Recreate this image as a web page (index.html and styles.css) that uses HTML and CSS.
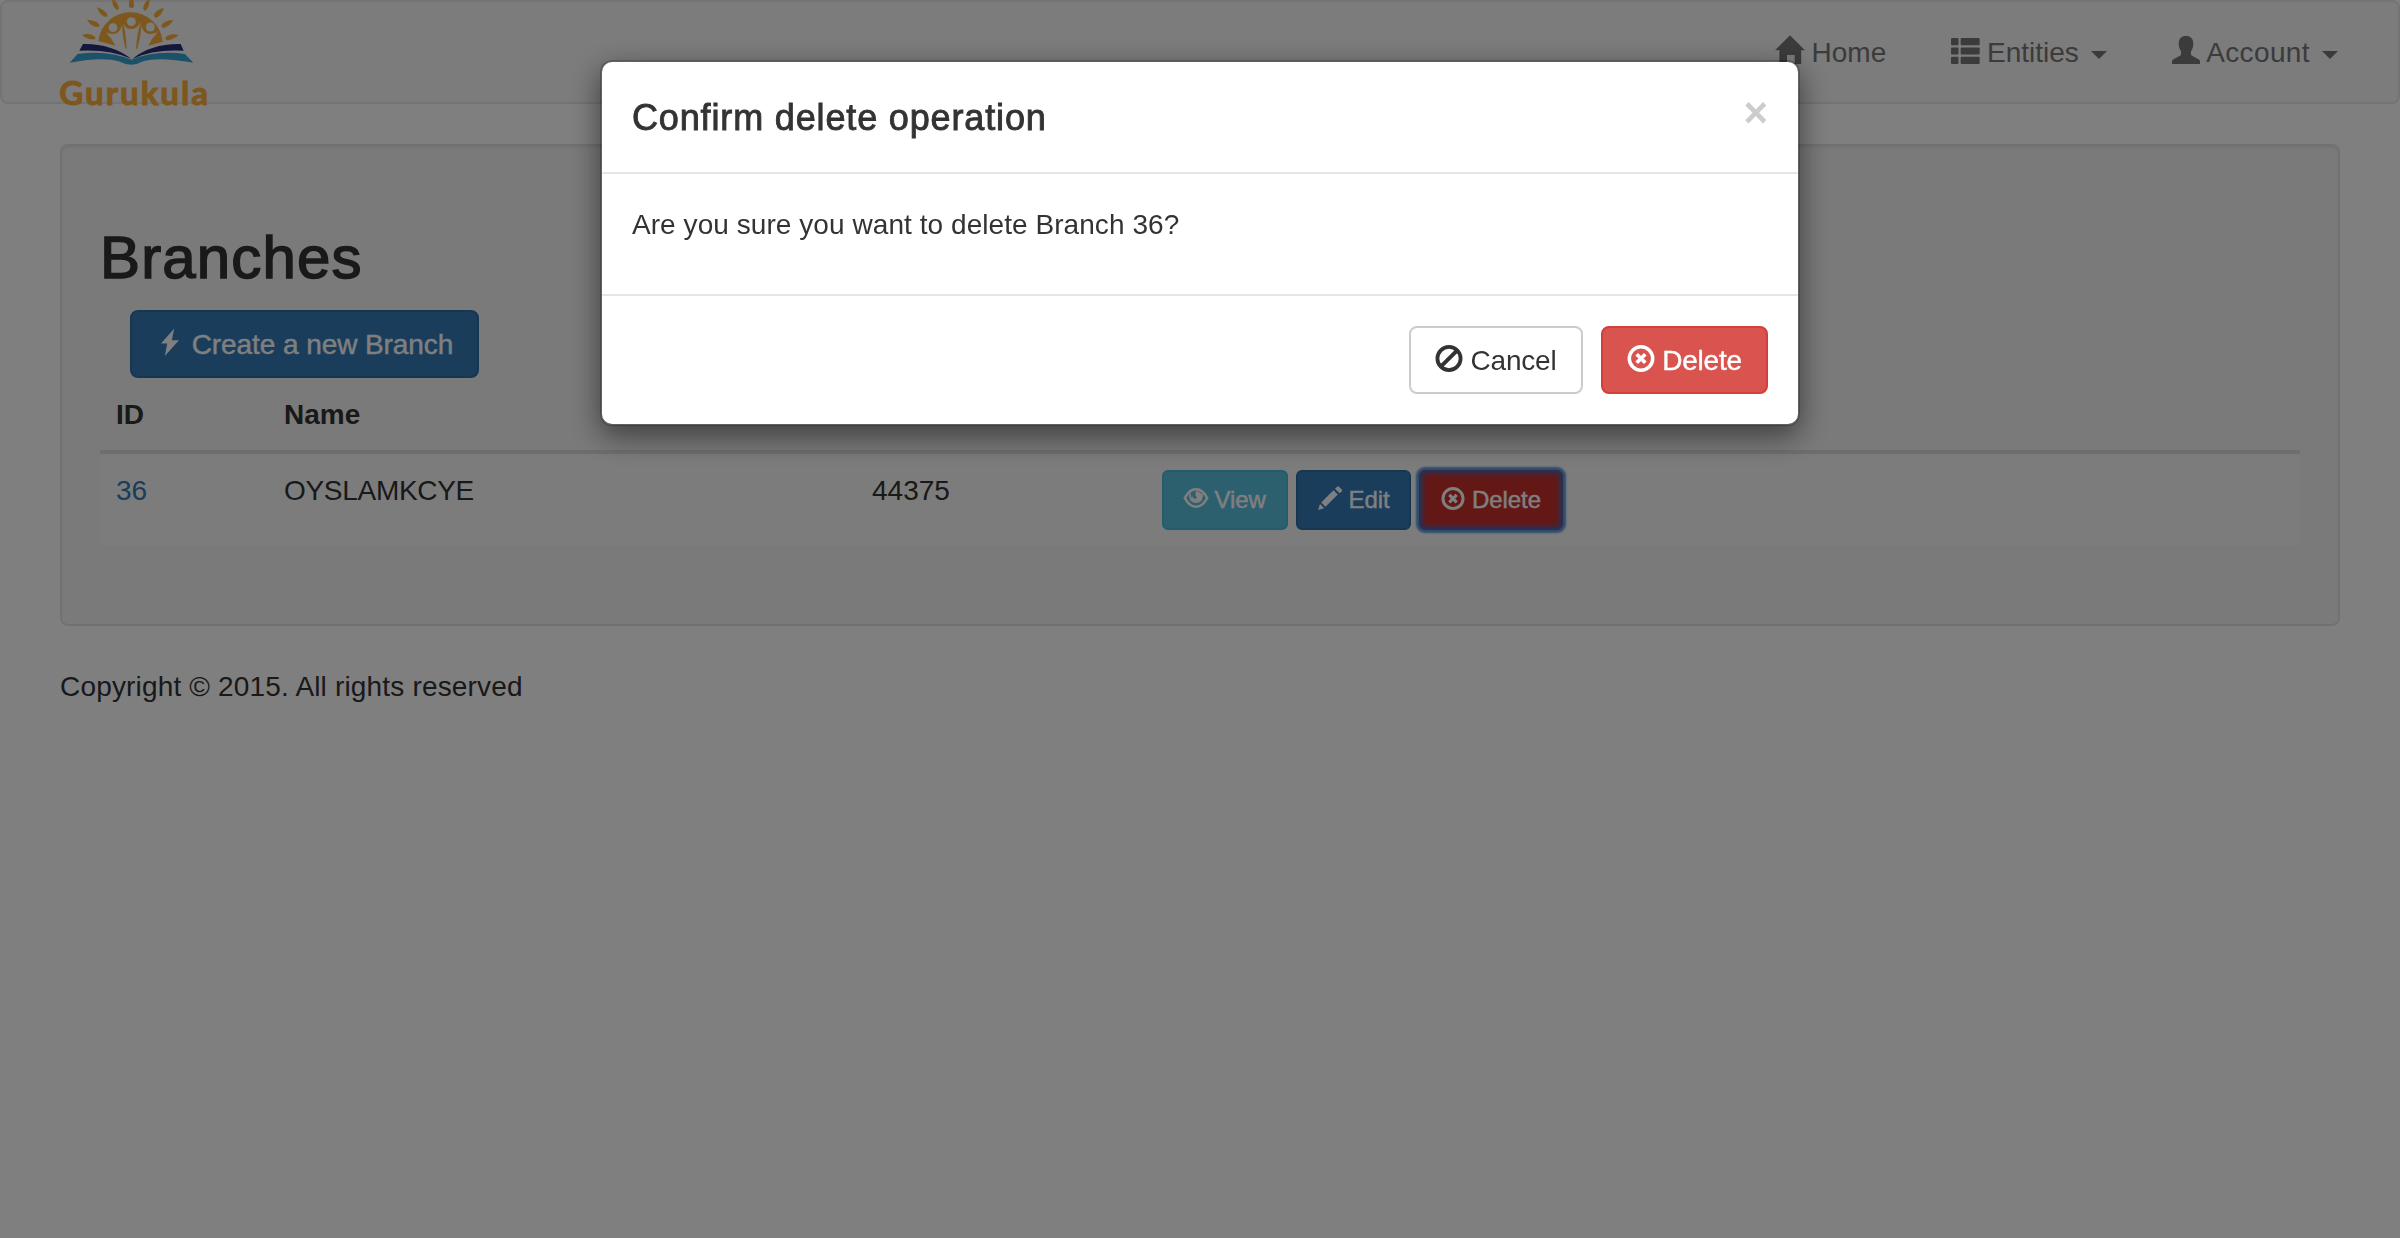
FILE: index.html
```html
<!DOCTYPE html>
<html lang="en">
<head>
<meta charset="utf-8">
<title>Branches</title>
<link rel="stylesheet" href="styles.css">
</head>
<body>
<svg class="sprite" aria-hidden="true">
  <symbol id="remove-circle" viewBox="0 0 28 28">
    <circle cx="14" cy="13.5" r="11.7" fill="none" stroke="currentColor" stroke-width="3.5"/>
    <path d="M9.7 9.2l8.6 8.6M18.3 9.2l-8.6 8.6" stroke="currentColor" stroke-width="3.7" fill="none"/>
  </symbol>
</svg>

<nav class="navbar">
  <a class="brand">
    <svg class="logo" viewBox="180 0 450 330">
      <g fill="#fbaf3c">
        <path d="M295 123A97 97 0 0 1 488 125L445 137 394 150 346 137Z"/>
        <path d="M286 117Q266 122 246 105Q270 97 286 111Z"/>
        <path d="M297 80Q276 84 261 59Q289 60 299 74Z"/>
        <path d="M320 51Q300 50 291 22Q316 30 322 45Z"/>
        <path d="M353 30Q336 24 336 -6Q355 8 357 26Z"/>
        <path d="M387 21Q386 0 394 -12Q403 0 402 21Q394 27 387 21Z"/>
        <path d="M429 26Q431 8 449 -6Q449 24 435 33Z"/>
        <path d="M461 46Q466 30 492 23Q483 50 466 54Z"/>
        <path d="M484 76Q493 61 520 60Q505 84 487 84Z"/>
        <path d="M496 112Q512 98 536 106Q515 123 498 120Z"/>
      </g>
      <g fill="#f8f8f8">
        <path d="M317 97Q338 106 352 98Q363 90 366 74Q367 110 378 152L346 137Q336 116 317 97Z"/>
        <path d="M370 71Q378 87 394 87Q411 87 423 65Q410 100 408 152H380Q379 105 370 71Z"/>
        <path d="M473 97Q450 106 437 98Q426 90 425 74Q422 110 411 152L445 137Q454 116 473 97Z"/>
        <circle cx="339" cy="83" r="13"/><circle cx="394" cy="65" r="13.500"/><circle cx="451" cy="81" r="13.500"/>
      </g>
      <path fill="#2a2c7c" d="M249 132Q332 130 394 176Q328 147 238 152ZM542 132Q456 130 397 176Q462 147 551 152Z"/>
      <path fill="#38a5d2" d="M233 162Q322 150 394 179Q466 150 555 162L580 188Q474 169 430 184Q412 194 394 194Q374 194 356 184Q310 170 209 188Z"/>
      <text class="logo-name" x="178" y="314" textLength="446">Gurukula</text>
    </svg>
  </a>
  <ul class="nav">
    <li><svg class="icon" viewBox="0 0 28 28"><path fill="currentColor" d="M14-1.800L29 13.200H25.200V27H18.700V18H11V27H3.400V13.200H-1Z"/></svg> Home</li>
    <li><svg class="icon" viewBox="0 0 28 28"><g fill="currentColor"><rect y="1" width="7.500" height="7.300" rx="1"/><rect x="9.700" y="1" width="19" height="7.300" rx="1"/><rect y="10.500" width="7.500" height="7" rx="1"/><rect x="9.700" y="10.500" width="19" height="7" rx="1"/><rect y="19.700" width="7.500" height="7.300" rx="1"/><rect x="9.700" y="19.700" width="19" height="7.300" rx="1"/></g></svg> Entities <span class="caret"></span></li>
    <li class="account"><svg class="icon" viewBox="0 0 28 28"><path fill="currentColor" d="M14-1C18.500-1 21.300 1.600 21.300 6.500C21.300 10.500 20 12.500 19 14.500V17.300Q19 18.200 20 18.800L26.500 22.200Q28 23 28 24.500V27H0V24.500Q0 23 1.500 22.200L8 18.800Q9 18.200 9 17.300V14.500C8 12.500 6.700 10.500 6.700 6.500C6.700 1.600 9.500-1 14-1Z"/></svg> Account <span class="caret"></span></li>
  </ul>
</nav>

<div class="container">
  <main class="well">
    <h2>Branches</h2>
    <div class="toolbar">
      <button class="btn primary"><svg class="icon" viewBox="0 0 28 28"><path fill="currentColor" d="M18.300-.500L5 14.500H11.200L8.800 27L23 11.200H15.800Z"/></svg> Create a new Branch</button>
    </div>
    <table>
      <colgroup><col class="col-id"><col class="col-name"><col class="col-code"><col></colgroup>
      <thead><tr><th>ID</th><th>Name</th><th></th><th></th></tr></thead>
      <tbody>
        <tr>
          <td><a class="link">36</a></td>
          <td class="name">OYSLAMKCYE</td>
          <td>44375</td>
          <td class="actions-cell"><div class="actions">
            <button class="btn small info"><svg class="icon" viewBox="0 0 24 24"><path fill="none" stroke="currentColor" stroke-width="2.600" d="M.800 11Q5.500 2.300 12 2.300T23.200 11Q18.500 19.700 12 19.700T.800 11Z"/><path fill="none" stroke="currentColor" stroke-width="1.600" d="M6 6.500Q4.800 14.500 12 15.500Q19.200 14.500 18 6.500"/><path fill="currentColor" d="M12 4A6 6 0 0 1 18 9.500A6 5.500 0 0 1 7.800 13Q6.800 10.500 8 8Q8.500 11.500 11 12L13 10.500Q10.500 8 12 4Z"/></svg> View</button>
            <button class="btn small primary"><svg class="icon" viewBox="0 0 24 24"><path fill="currentColor" d="M0 23L2 17L6.200 21.200ZM3.200 15.500L15.500 3.200L19.800 7.500L7.500 19.800ZM17 1.800L19 -.200Q20-1.200 21 -.200L23.800 2.500Q24.700 3.500 23.800 4.500L21.500 6.300Z"/></svg> Edit</button>
            <button class="btn small danger focused"><svg class="icon"><use href="#remove-circle"/></svg> Delete</button>
          </div></td>
        </tr>
      </tbody>
    </table>
  </main>
  <footer>Copyright © 2015. All rights reserved</footer>
</div>

<div class="backdrop">
  <section class="modal" role="dialog">
    <header class="modal-header"><h4>Confirm delete operation</h4><span class="close">×</span></header>
    <div class="modal-body"><p>Are you sure you want to delete Branch 36?</p></div>
    <div class="modal-footer">
      <button class="btn plain"><svg class="icon" viewBox="0 0 28 28"><circle cx="14" cy="13.500" r="11.600" fill="none" stroke="currentColor" stroke-width="3.800"/><path d="M5.800 21.700L22.200 5.300" stroke="currentColor" stroke-width="4"/></svg> Cancel</button>
      <button class="btn danger"><svg class="icon"><use href="#remove-circle"/></svg> Delete</button>
    </div>
  </section>
</div>
</body>
</html>
```
FILE: styles.css
```css
* { box-sizing: border-box; }
html, body { height: 100%; }
body {
  margin: 0;
  overflow: hidden;
  background: #fff;
  color: #333;
  font: 28px/40px "Liberation Sans", Arial, sans-serif;
}
.sprite { display: none; }
h2, h4, p, ul { margin: 0; padding: 0; font-weight: 400; }

.icon {
  width: 1em;
  height: 1em;
  vertical-align: -3px;
  overflow: visible;
}

.navbar {
  display: flex;
  justify-content: space-between;
  height: 104px;
  padding: 0 60px 0 58px;
  margin-bottom: 40px;
  border: 2px solid #e7e7e7;
  border-radius: 8px;
  background: #f8f8f8;
}
.brand { height: 110px; margin-top: -2px; }
.logo { display: block; width: 150px; height: 110px; overflow: visible; }
.logo-name {
  font: 700 99px Lato, sans-serif;
  fill: #fbaf3c;
  stroke: #fbaf3c;
  stroke-width: 3px;
}
.nav {
  display: flex;
  gap: 65px;
  padding-top: 31px;
  list-style: none;
  color: #777;
  white-space: nowrap;
}
.account { letter-spacing: .35px; }
.caret {
  display: inline-block;
  margin-left: 4px;
  vertical-align: middle;
  border: 8px solid transparent;
  border-top-color: currentColor;
  border-bottom: 0;
}

.container { padding: 0 60px; }
.well {
  margin-bottom: 41px;
  padding: 38px;
  border: 2px solid #e3e3e3;
  border-radius: 8px;
  background: #f5f5f5;
  box-shadow: inset 0 2px 2px rgba(0, 0, 0, .05);
}
h2 {
  margin: 41px 0 19px;
  font-size: 60px;
  line-height: 66px;
  letter-spacing: 1.15px;
  -webkit-text-stroke: 1.5px currentColor;
}
.toolbar { display: flex; padding-left: 30px; }

.btn {
  padding: 13px 24px 11px;
  border: 2px solid;
  border-radius: 8px;
  color: #fff;
  font: inherit;
  letter-spacing: -.08px;
  white-space: nowrap;
  -webkit-text-stroke: .4px currentColor;
}
.small { padding: 10px 20px; border-radius: 6px; font-size: 24px; line-height: 36px; }
.primary { background: #337ab7; border-color: #2e6da4; }
.info { background: #5bc0de; border-color: #46b8da; }
.danger { background: #d9534f; border-color: #d43f3a; }
.plain { background: #fff; border-color: #ccc; color: #333; -webkit-text-stroke: 0; }
.modal .btn { letter-spacing: -.18px; }
.focused {
  background: #c9302c;
  border-color: #5a5d9c;
  box-shadow: 0 0 2px 3px #5c98dc, inset 0 0 5px 2px #5a5d9c;
}

table { width: 100%; margin-bottom: 40px; border-collapse: separate; border-spacing: 0; table-layout: fixed; }
.col-id { width: 168px; }
.col-name { width: 588px; }
.col-code { width: 290px; }
th, td { padding: 17px 16px 15px; text-align: left; vertical-align: top; }
th { border-bottom: 4px solid #ddd; }
td { background: #f9f9f9; }
.actions-cell { padding: 16px; }
.name { letter-spacing: -.3px; }
.link { color: #337ab7; }
.actions { display: flex; gap: 8px; }
footer { letter-spacing: .17px; }

.backdrop {
  position: fixed;
  inset: 0;
  padding-top: 60px;
  background: rgba(0, 0, 0, .5);
}
.modal {
  width: 1200px;
  margin: 0 auto;
  border: 2px solid rgba(0, 0, 0, .2);
  border-radius: 12px;
  background: #fff;
  background-clip: padding-box;
  box-shadow: 0 10px 30px rgba(0, 0, 0, .5);
}
.modal-header {
  display: flex;
  justify-content: space-between;
  padding: 31px 30px 29px;
  border-bottom: 2px solid #e5e5e5;
}
h4 { font-size: 36px; line-height: 50px; letter-spacing: .85px; -webkit-text-stroke: .9px currentColor; }
.close { height: 42px; margin-top: -1px; color: #ccc; font-size: 42px; font-weight: 700; line-height: 42px; }
.modal-body { padding: 31px 30px 29px; letter-spacing: .06px; }
.modal-body p { margin-bottom: 20px; }
.modal-footer {
  display: flex;
  justify-content: flex-end;
  gap: 18px;
  padding: 30px;
  border-top: 2px solid #e5e5e5;
}
```
